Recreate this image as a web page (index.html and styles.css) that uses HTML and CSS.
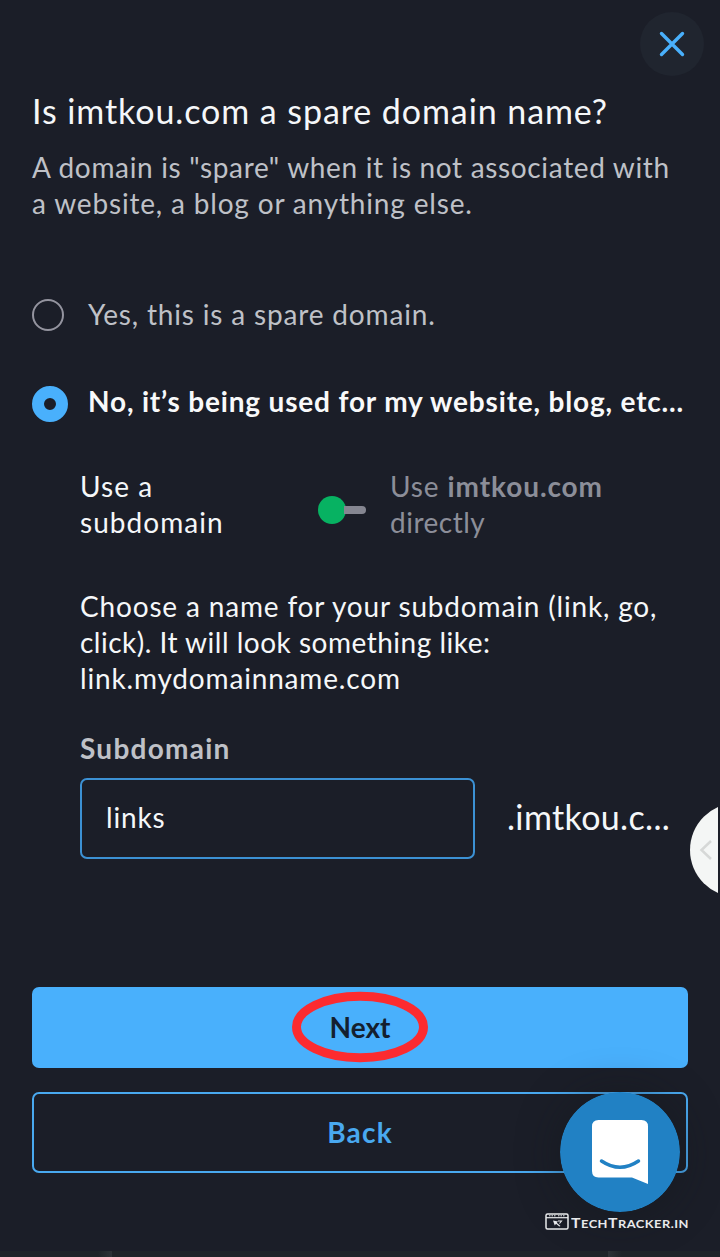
FILE: index.html
```html
<!DOCTYPE html>
<html lang="en">
<head>
<meta charset="utf-8">
<title>Domain setup</title>
<link rel="stylesheet" href="styles.css">
</head>
<body>
<main class="dialog">
  <header class="top">
    <button class="close" aria-label="Close">
      <svg width="64" height="64" viewBox="0 0 64 64"><path d="M21.500 21.500L42.500 42.500M42.500 21.500L21.500 42.500" stroke="#49b0fc" stroke-width="3.400" stroke-linecap="round"/></svg>
    </button>
  </header>
  <h1 class="title">Is imtkou.com a spare domain name?</h1>
  <p class="intro"><span class="snug">A domain is "spare" when it is not associated with</span><br>a website, a blog or anything else.</p>

  <div class="option">
    <span class="radio"></span>
    <span class="option-text">Yes, this is a spare domain.</span>
  </div>
  <div class="option option-on">
    <span class="radio radio-on"></span>
    <span class="option-text">No, it’s being used for my website, blog, etc...</span>
  </div>

  <section class="details">
    <div class="switch-row">
      <div class="switch-left">Use a<br>subdomain</div>
      <div class="switch"><span class="knob"></span><span class="track"></span></div>
      <div class="switch-right">Use <b>imtkou.com</b><br><span class="tight">directly</span></div>
    </div>
    <p class="hint">Choose a name for your subdomain (link, go,<br><span class="tight">click). It will look something like:</span><br>link.mydomainname.com</p>
    <div class="label">Subdomain</div>
    <div class="field-row">
      <div class="input">links</div>
      <div class="suffix">.imtkou.c...</div>
    </div>
  </section>

  <div class="actions">
    <div class="btn btn-next">Next
      <svg class="ring" width="136" height="72" viewBox="0 0 136 72"><ellipse cx="68" cy="36" rx="63.500" ry="30.700" fill="none" stroke="#fc2b30" stroke-width="9"/></svg>
    </div>
    <div class="btn btn-back">Back</div>
  </div>

  <svg class="handle" width="32" height="96" viewBox="0 0 32 96"><circle cx="51" cy="48" r="47" fill="#f4f6f5"/><path d="M25 39L15.500 48L25 57" fill="none" stroke="#d6d8d7" stroke-width="2.500"/></svg>

  <svg class="chat" width="120" height="120" viewBox="0 0 120 120">
    <circle cx="60" cy="60" r="60" fill="#2181c4"/>
    <path d="M38.500 28H81.500Q88 28 88 34.500V92L72 85.500H38.500Q32 85.500 32 79V34.500Q32 28 38.500 28Z" fill="#fff"/>
    <path d="M41.500 69Q60 81.500 78.500 69" fill="none" stroke="#2181c4" stroke-width="3.500" stroke-linecap="round"/>
  </svg>

  <div class="brand">
    <svg width="24" height="17" viewBox="0 0 24 17"><rect x="1" y="1" width="22" height="15" rx="1.500" fill="none" stroke="#e9eaec" stroke-width="1.500"/><path d="M1 4.700H23" stroke="#e9eaec" stroke-width="1.200"/><path d="M4 2.800H11M13 2.800H20" stroke="#e9eaec" stroke-width="1" stroke-dasharray="1.500 1"/><path d="M8 7.500L13 8.500L11.800 9.800L15.500 13L14.300 13.500L11 10.800L9.800 12.500Z" fill="#e9eaec"/><path d="M13 8H16.500L14.500 10.500" fill="none" stroke="#e9eaec" stroke-width="1.100"/></svg>
    <span class="brand-name"><span class="cap">T</span>ech<span class="cap">T</span>racker.in</span>
  </div>
  <div class="edge"><i></i><i></i></div>
</main>
</body>
</html>
```

FILE: styles.css
```css
* { box-sizing: border-box; margin: 0; padding: 0; }
body { background: #1b1e28; color: #f5f7f9; font: 28px/36px Lato, "Open Sans", sans-serif; letter-spacing: .83px; }
button { border: 0; background: none; font: inherit; }
b { font-weight: 700; }
.dialog { position: relative; width: 720px; height: 1257px; padding: 12px 32px 0; overflow: hidden; }
.top { display: flex; justify-content: flex-end; margin-right: -16px; height: 64px; }
.close { width: 64px; height: 64px; border-radius: 50%; background: #20252f; }
.close svg { display: block; }
.title { margin-top: 13px; font-size: 34px; line-height: 44px; font-weight: 400; letter-spacing: .92px; white-space: nowrap; }
.intro { margin-top: 16px; color: #bfc1c7; white-space: nowrap; }
.snug { letter-spacing: .66px; }
.tight { letter-spacing: .5px; }
.option { display: flex; align-items: center; height: 36px; margin-top: 75px; color: #bfc1c7; white-space: nowrap; }
.option-on { margin-top: 51px; color: #f8f9fa; font-weight: 700; }
.radio { width: 32px; height: 32px; margin: 2px 24px 0 0; border: 2px solid #94949f; border-radius: 50%; }
.radio-on { width: 36px; height: 36px; margin: 6px 20px 0 0; border: 12px solid #49b0fc; }
.details { margin: 49px 0 0 48px; white-space: nowrap; }
.switch-row { display: flex; align-items: center; }
.switch-left { width: 238px; letter-spacing: 1.05px; }
.switch { display: flex; align-items: center; width: 72px; padding-top: 12px; }
.knob { width: 28px; height: 28px; border-radius: 50%; background: #07b262; }
.track { width: 22px; height: 8px; margin-left: -2px; border-radius: 0 4px 4px 0; background: #858691; }
.switch-right { color: #8c8e99; letter-spacing: .9px; }
.hint { margin-top: 48px; }
.label { margin-top: 34px; color: #bfc1c7; font-weight: 700; letter-spacing: 1.25px; }
.field-row { display: flex; margin-top: 12px; height: 81px; }
.input { width: 395px; padding: 19px 24px; border: 2px solid #3c91d4; border-radius: 7px; }
.suffix { margin-left: 32px; font-size: 34px; line-height: 77px; letter-spacing: .35px; }
.actions { display: grid; gap: 24px; margin-top: 128px; }
.btn { position: relative; display: flex; align-items: center; justify-content: center; height: 81px; padding-bottom: 2px; border-radius: 7px; font-weight: 700; letter-spacing: 0; }
.btn-next { background: #49b0fc; color: #14202f; }
.btn-back { border: 2px solid #49a9f0; color: #49a9f0; letter-spacing: 1.2px; }
.ring { position: absolute; left: 260px; top: 4px; }
.handle { position: absolute; left: 686px; top: 802px; }
.chat { position: absolute; left: 560px; top: 1092px; border-radius: 50%; box-shadow: 0 2px 40px rgba(20, 24, 28, .5); }
.brand { position: absolute; left: 545px; top: 1213px; display: flex; align-items: center; gap: 2px; height: 17px; color: #e9eaec; }
.brand-name { font-size: 11px; line-height: 17px; font-weight: 700; letter-spacing: .4px; text-transform: uppercase; transform: scaleX(1.17); transform-origin: left; padding-top: 3px; }
.cap { font-size: 13.5px; }
.edge { position: absolute; left: 0; right: 0; bottom: 0; height: 6px; display: flex; justify-content: space-between; padding: 0 98px; background: #1e2428; }
.edge i { width: 14px; background: linear-gradient(90deg, #1e2428, #2d3337); }
.edge i + i { background: linear-gradient(90deg, #2d3337, #1e2428); }
```
